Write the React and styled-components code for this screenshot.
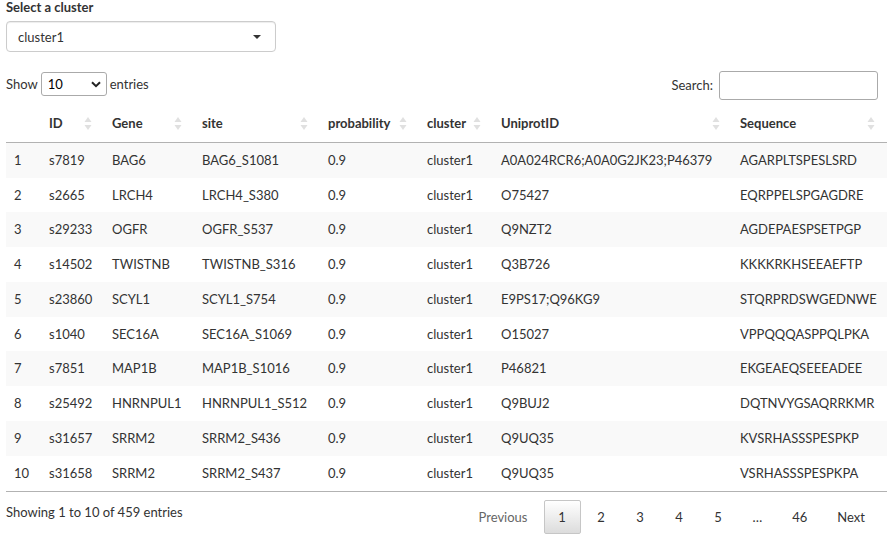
import React from "react";
import styled, { createGlobalStyle } from "styled-components";

const Global = createGlobalStyle`
  html, body { margin: 0; padding: 0; background: #fff; }
  body { font-family: Lato, "Open Sans", sans-serif; font-size: 13px; color: #333; }
`;

const Page = styled.div`
  padding: 0 0 0 6px;
  width: 881px;
`;

const Label = styled.label`
  display: block;
  font-weight: 700;
  line-height: 14px;
  margin-bottom: 7px;
`;

const ClusterSelect = styled.div`
  box-sizing: border-box;
  width: 270px;
  height: 31px;
  border: 1px solid #ccc;
  border-radius: 4px;
  box-shadow: inset 0 1px 1px rgba(0, 0, 0, 0.075);
  display: flex;
  align-items: center;
  justify-content: space-between;
  padding: 0 14px 0 11px;
`;

const Caret = styled.span`
  width: 0;
  height: 0;
  border-left: 4px solid transparent;
  border-right: 4px solid transparent;
  border-top: 4px solid #333;
`;

const Controls = styled.div`
  display: flex;
  justify-content: space-between;
  align-items: center;
  margin-top: 17px;
  padding-right: 9px;
  height: 30px;
`;

const LengthBox = styled.div`
  display: flex;
  align-items: center;
  gap: 3px;
`;

const SmallSelect = styled.div`
  box-sizing: border-box;
  width: 66px;
  height: 24px;
  border: 1px solid #aaa;
  border-radius: 3px;
  display: flex;
  align-items: center;
  justify-content: space-between;
  padding: 0 5px 0 6px;
  color: #000;
`;

const SearchBox = styled.div`
  display: flex;
  align-items: center;
  gap: 6px;
  padding-top: 2px;
`;

const SearchInput = styled.div`
  box-sizing: border-box;
  width: 159px;
  height: 29px;
  border: 1px solid #aaa;
  border-radius: 3px;
`;

const Table = styled.table`
  width: 881px;
  table-layout: fixed;
  border-collapse: collapse;
  margin-top: 6px;
  border-bottom: 1px solid rgba(0, 0, 0, 0.3);
`;

const Th = styled.th`
  position: relative;
  text-align: left;
  font-weight: 700;
  padding: 10px 18px 9px 8px;
  line-height: 17.7px;
  border-bottom: 1px solid rgba(0, 0, 0, 0.3);
  white-space: nowrap;
`;

const SortIcon = styled.svg`
  position: absolute;
  right: 12px;
  top: 50%;
  margin-top: -6px;
`;

const Tr = styled.tr`
  background: ${(p) => (p.$odd ? "#f9f9f9" : "#fff")};
  & + & td {
    border-top: 1px solid #ddd;
  }
`;

const Td = styled.td`
  padding: 8px 8px;
  line-height: 18.8px;
  white-space: nowrap;
  overflow: hidden;
`;

const Footer = styled.div`
  display: flex;
  justify-content: space-between;
  align-items: flex-start;
  padding-right: 8px;
`;

const Info = styled.div`
  padding-top: 11px;
  line-height: 18px;
`;

const Pager = styled.div`
  display: flex;
  align-items: center;
  margin-top: 8px;
`;

const PageButton = styled.span`
  box-sizing: border-box;
  min-width: 37px;
  height: 34px;
  padding: 0 13px;
  margin-left: 2px;
  display: flex;
  align-items: center;
  justify-content: center;
  border: 1px solid ${(p) => (p.$current ? "#c6c6c6" : "transparent")};
  border-radius: 2px;
  color: ${(p) => (p.$disabled ? "#666" : "#333")};
  background: ${(p) =>
    p.$current ? "linear-gradient(to bottom, #fff 0%, #dcdcdc 100%)" : "transparent"};
`;

const Ellipsis = styled.span`
  padding: 0 14px;
  margin-left: 2px;
`;

const cols = [
  ["", 35],
  ["ID", 63],
  ["Gene", 90],
  ["site", 126],
  ["probability", 99],
  ["cluster", 74],
  ["UniprotID", 239],
  ["Sequence", 155],
];

const rows = [
  ["s7819", "BAG6", "BAG6_S1081", "A0A024RCR6;A0A0G2JK23;P46379", "AGARPLTSPESLSRD"],
  ["s2665", "LRCH4", "LRCH4_S380", "O75427", "EQRPPELSPGAGDRE"],
  ["s29233", "OGFR", "OGFR_S537", "Q9NZT2", "AGDEPAESPSETPGP"],
  ["s14502", "TWISTNB", "TWISTNB_S316", "Q3B726", "KKKKRKHSEEAEFTP"],
  ["s23860", "SCYL1", "SCYL1_S754", "E9PS17;Q96KG9", "STQRPRDSWGEDNWE"],
  ["s1040", "SEC16A", "SEC16A_S1069", "O15027", "VPPQQQASPPQLPKA"],
  ["s7851", "MAP1B", "MAP1B_S1016", "P46821", "EKGEAEQSEEEADEE"],
  ["s25492", "HNRNPUL1", "HNRNPUL1_S512", "Q9BUJ2", "DQTNVYGSAQRRKMR"],
  ["s31657", "SRRM2", "SRRM2_S436", "Q9UQ35", "KVSRHASSSPESPKP"],
  ["s31658", "SRRM2", "SRRM2_S437", "Q9UQ35", "VSRHASSSPESPKPA"],
];

const Sort = () => (
  <SortIcon width="8" height="13" viewBox="0 0 8 13">
    <path d="M4 0 L7.5 5 H0.5 Z" fill="#e0e0e0" />
    <path d="M4 13 L7.5 8 H0.5 Z" fill="#e0e0e0" />
  </SortIcon>
);

const Chevron = () => (
  <svg width="10" height="7" viewBox="0 0 10 7">
    <path d="M1 1.2 L5 5.2 L9 1.2" fill="none" stroke="#222" strokeWidth="2" />
  </svg>
);

export default function App() {
  return (
    <Page>
      <Global />
      <Label>Select a cluster</Label>
      <ClusterSelect>
        <span>cluster1</span>
        <Caret />
      </ClusterSelect>
      <Controls>
        <LengthBox>
          <span>Show</span>
          <SmallSelect>
            <span>10</span>
            <Chevron />
          </SmallSelect>
          <span>entries</span>
        </LengthBox>
        <SearchBox>
          <span>Search:</span>
          <SearchInput />
        </SearchBox>
      </Controls>
      <Table>
        <colgroup>
          {cols.map(([name, w]) => (
            <col key={name || "idx"} style={{ width: w }} />
          ))}
        </colgroup>
        <thead>
          <tr>
            {cols.map(([name]) => (
              <Th key={name || "idx"}>
                {name}
                {name && <Sort />}
              </Th>
            ))}
          </tr>
        </thead>
        <tbody>
          {rows.map((r, i) => (
            <Tr key={r[0]} $odd={i % 2 === 0}>
              <Td>{i + 1}</Td>
              <Td>{r[0]}</Td>
              <Td>{r[1]}</Td>
              <Td>{r[2]}</Td>
              <Td>0.9</Td>
              <Td>cluster1</Td>
              <Td>{r[3]}</Td>
              <Td>{r[4]}</Td>
            </Tr>
          ))}
        </tbody>
      </Table>
      <Footer>
        <Info>Showing 1 to 10 of 459 entries</Info>
        <Pager>
          <PageButton $disabled>Previous</PageButton>
          <PageButton $current>1</PageButton>
          <PageButton>2</PageButton>
          <PageButton>3</PageButton>
          <PageButton>4</PageButton>
          <PageButton>5</PageButton>
          <Ellipsis>…</Ellipsis>
          <PageButton>46</PageButton>
          <PageButton>Next</PageButton>
        </Pager>
      </Footer>
    </Page>
  );
}
